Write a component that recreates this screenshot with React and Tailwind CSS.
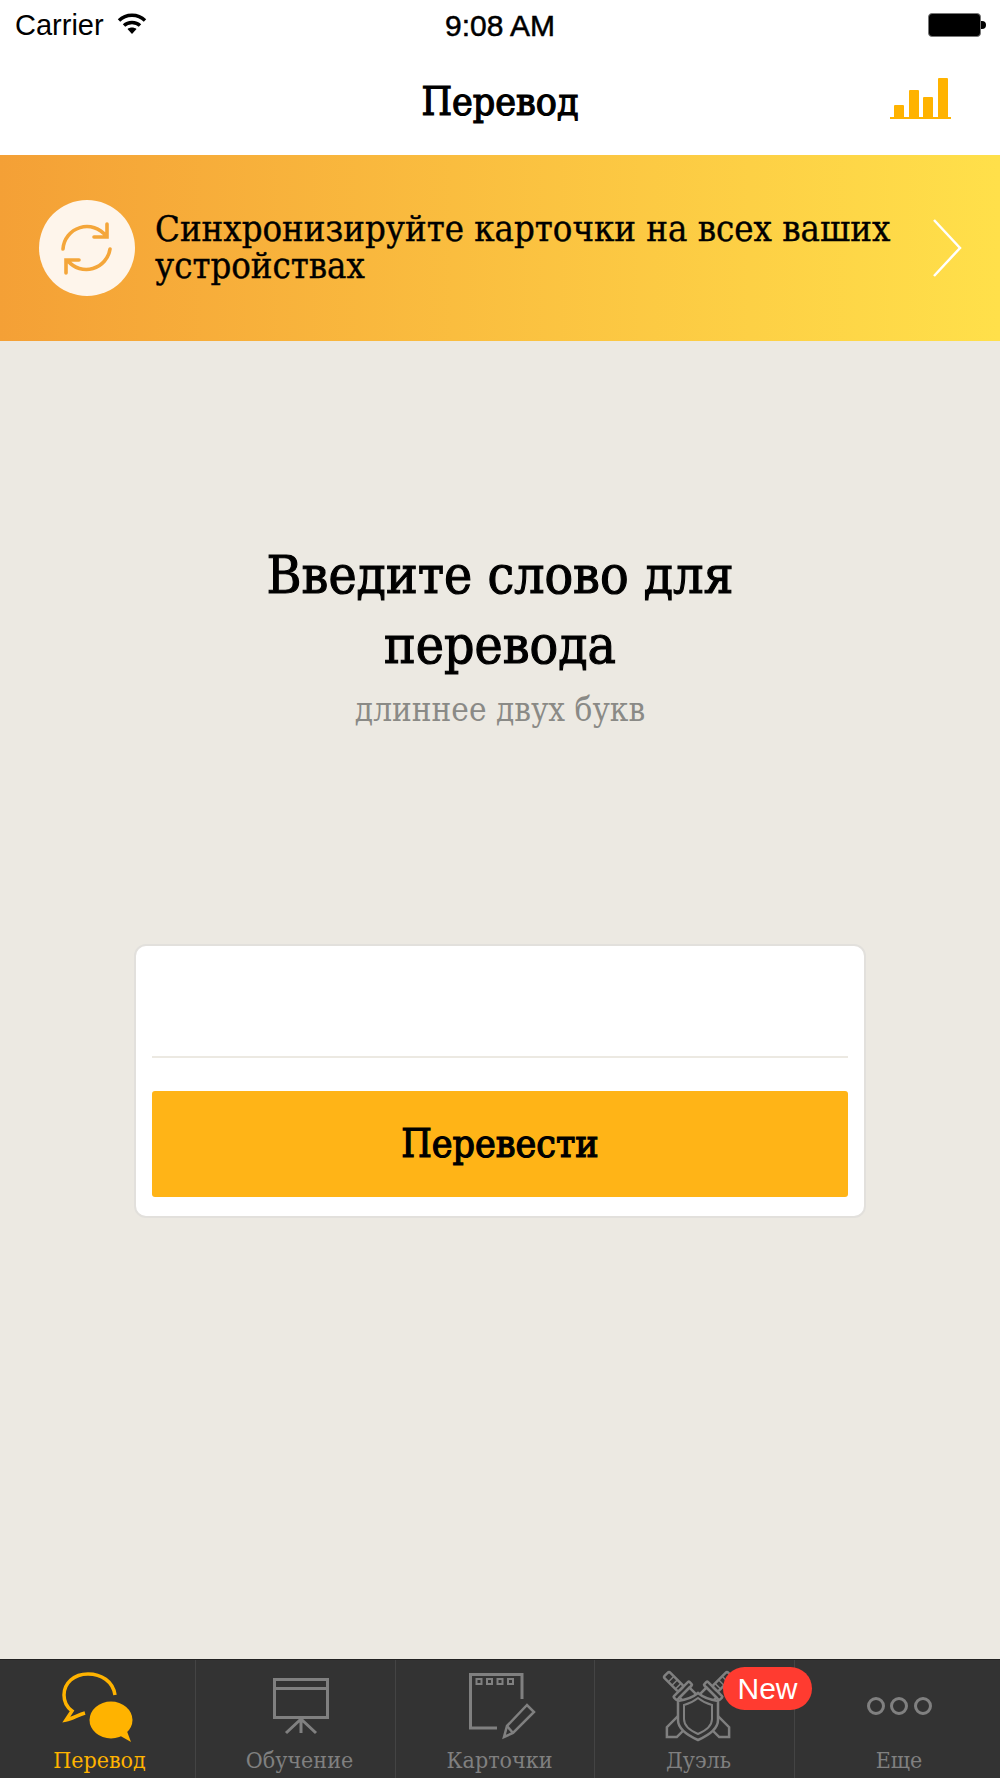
import React from 'react';

const serif = "font-['DejaVu_Serif_Condensed','DejaVu_Serif',serif]";

const ChatIcon = () => (
  <svg width="80" height="72" viewBox="0 0 80 72" fill="none">
    <path d="M55 25C53 11 41 4 28 4C14 4 4 13 4 25C4 32 8 38 12 41L6 50C12 49 18 45 25 43" stroke="#ffb300" strokeWidth="3.5" />
    <ellipse cx="51" cy="50" rx="21.5" ry="18.5" fill="#ffb300" />
    <path d="M57 64L71 72L65 56Z" fill="#ffb300" />
  </svg>
);

const BoardIcon = () => (
  <svg width="80" height="72" viewBox="0 0 80 72" fill="none" stroke="#808080" strokeWidth="3">
    <rect x="14.5" y="9.5" width="53" height="38" />
    <path d="M14 18.5H68M41 48V63M41 49L26 63M41 49L56 63" />
  </svg>
);

const CardsIcon = () => (
  <svg width="80" height="72" viewBox="0 0 80 72" fill="none" stroke="#808080" strokeWidth="3">
    <path d="M62 29V4.5H10.5V58H37" />
    <rect x="16.5" y="9" width="5" height="5" strokeWidth="2" />
    <rect x="27" y="9" width="5" height="5" strokeWidth="2" />
    <rect x="37.5" y="9" width="5" height="5" strokeWidth="2" />
    <rect x="48" y="9" width="5" height="5" strokeWidth="2" />
    <path d="M44 67L47 56L67 35L74 42L53 63Z" strokeWidth="2.5" />
    <path d="M47 56L53 63" strokeWidth="2.5" />
  </svg>
);

const Sword = ({ angle }) => (
  <g transform={`rotate(${angle} 39 36)`}>
    <rect x="-6" y="32" width="21" height="8" rx="2" />
    <path d="M1 32V40M6 32V40M11 32V40" strokeWidth="1.5" />
    <rect x="15" y="25" width="5" height="22" rx="1" />
    <path d="M20 29H76L83 36L76 43H20Z" fill="#333333" />
  </g>
);

const DuelIcon = () => (
  <svg width="80" height="72" viewBox="0 0 80 72" fill="none" stroke="#808080" strokeWidth="2.5">
    <Sword angle={45} />
    <Sword angle={135} />
    <path d="M39 23C33 28 26 30 19 31V50C19 60 30 66 39 70C48 66 59 60 59 50V31C52 30 45 28 39 23Z" fill="#333333" />
    <path d="M39 28C34 32 29 34 25 35V49C25 56 32 61 39 64C46 61 53 56 53 49V35C49 34 44 32 39 28Z" strokeWidth="2" />
  </svg>
);

const MoreIcon = () => (
  <svg width="80" height="72" viewBox="0 0 80 72" fill="none" stroke="#808080" strokeWidth="3">
    <circle cx="17" cy="36" r="7.5" />
    <circle cx="40" cy="36" r="7.5" />
    <circle cx="64" cy="36" r="7.5" />
  </svg>
);

const tabs = [
  { label: 'Перевод', icon: <ChatIcon />, width: 'w-[196px] pl-[4px]', active: true },
  { label: 'Обучение', icon: <BoardIcon />, width: 'w-[200px] pl-[8px]' },
  { label: 'Карточки', icon: <CardsIcon />, width: 'w-[199px] pl-[9px]' },
  { label: 'Дуэль', icon: <DuelIcon />, width: 'w-[200px] pl-[8px]', badge: true },
  { label: 'Еще', icon: <MoreIcon />, width: 'w-[205px] pl-[3px]' },
];

export default function App() {
  return (
    <div className={`flex h-[1778px] w-[1000px] flex-col overflow-hidden bg-[#ece9e2] ${serif}`}>
      {/* status bar */}
      <div className="relative flex h-[50px] items-center bg-white pl-[15px] pr-[14px] font-['Liberation_Sans',sans-serif] text-[29px] text-black">
        <span className="mt-[2px]">Carrier</span>
        <svg className="ml-[13px] mb-[3px]" width="30" height="23" viewBox="0 0 30 23" fill="none" stroke="#000" strokeWidth="3.4">
          <path d="M2 8.5C9 1.5 21 1.5 28 8.5" />
          <path d="M7 13.5C11 9.5 19 9.5 23 13.5" />
          <path d="M15 22L10.5 17C13 15 17 15 19.5 17Z" fill="#000" stroke="none" />
        </svg>
        <span className="absolute left-0 right-0 text-center text-[30px] [-webkit-text-stroke:0.5px_#000]">9:08 AM</span>
        <div className="ml-auto mb-[1px] flex items-center">
          <div className="h-[24px] w-[53px] rounded-[4px] border border-[#777] bg-black" />
          <div className="h-[8px] w-[5px] rounded-r-full bg-black" />
        </div>
      </div>

      {/* nav */}
      <div className="relative flex h-[105px] items-center justify-center bg-white">
        <h1 className="text-[39px] font-normal text-black [-webkit-text-stroke:1.2px_#000]">Перевод</h1>
        <svg className="absolute right-[49px] top-[28px]" width="61" height="41" viewBox="0 0 61 41" fill="#ffb300">
          <rect x="4" y="27" width="10" height="13" rx="1" />
          <rect x="19" y="12" width="10" height="28" rx="1" />
          <rect x="33" y="19" width="10" height="21" rx="1" />
          <rect x="48" y="0" width="10" height="40" rx="1" />
          <rect x="0" y="39" width="61" height="2" />
        </svg>
      </div>

      {/* sync banner */}
      <div className="flex h-[186px] items-center bg-gradient-to-r from-[#f4a036] to-[#ffe04a] pl-[39px] pr-[38px]">
        <div className="flex h-[96px] w-[96px] shrink-0 items-center justify-center rounded-full bg-[#fef5eb]">
          <svg width="96" height="96" viewBox="0 0 96 96" fill="none" stroke="#f4a63a" strokeWidth="3.6" strokeLinecap="round">
            <path d="M24 49A24 24 0 0 1 67 36M68 24V37H55" />
            <path d="M71 49A24 24 0 0 1 29 61M40 60H27V73" />
          </svg>
        </div>
        <p className="ml-[20px] mb-[3px] w-[750px] text-[36.2px] leading-[37px] text-black [-webkit-text-stroke:0.4px_#000]">Синхронизируйте карточки на всех ваших устройствах</p>
        <svg className="ml-auto shrink-0" width="30" height="58" viewBox="0 0 30 58" fill="none" stroke="#fff" strokeWidth="2.5">
          <path d="M2 1L28 29L2 57" />
        </svg>
      </div>

      {/* main */}
      <div className="flex flex-1 flex-col items-center pt-[199px]">
        <h2 className="w-[560px] text-center text-[53px] font-normal leading-[70px] text-black [-webkit-text-stroke:1.1px_#000]">Введите слово для перевода</h2>
        <p className="mt-[10px] text-[33px] leading-[40px] text-[#8a8a86]">длиннее двух букв</p>
        <div className="mt-[214px] w-[732px] rounded-[12px] border-2 border-[#e2e0dc] bg-white px-[16px] pb-[19px] pt-[110px]">
          <div className="h-[2px] bg-[#ece9e2]" />
          <button className="mt-[33px] h-[106px] w-full rounded-[3px] bg-[#ffb417] text-[39px] font-normal text-black [-webkit-text-stroke:1.2px_#000]">Перевести</button>
        </div>
      </div>

      {/* tab bar */}
      <div className="flex h-[119px] border-t border-[#222] bg-[#333333]">
        {tabs.map((tab) => (
          <div key={tab.label} className={`relative flex flex-col items-center border-r border-[#444444] last:border-r-0 pt-[10px] ${tab.width}`}>
            {tab.icon}
            <span className={`mt-[3px] text-[23px] leading-[30px] ${tab.active ? 'text-[#ffb300]' : 'text-[#808080]'}`}>{tab.label}</span>
            {tab.badge && (
              <span className="absolute left-[128px] top-[7px] flex h-[43px] w-[89px] items-center justify-center rounded-full bg-[#ff3b30] font-['Liberation_Sans',sans-serif] text-[30px] text-white">New</span>
            )}
          </div>
        ))}
      </div>
    </div>
  );
}
